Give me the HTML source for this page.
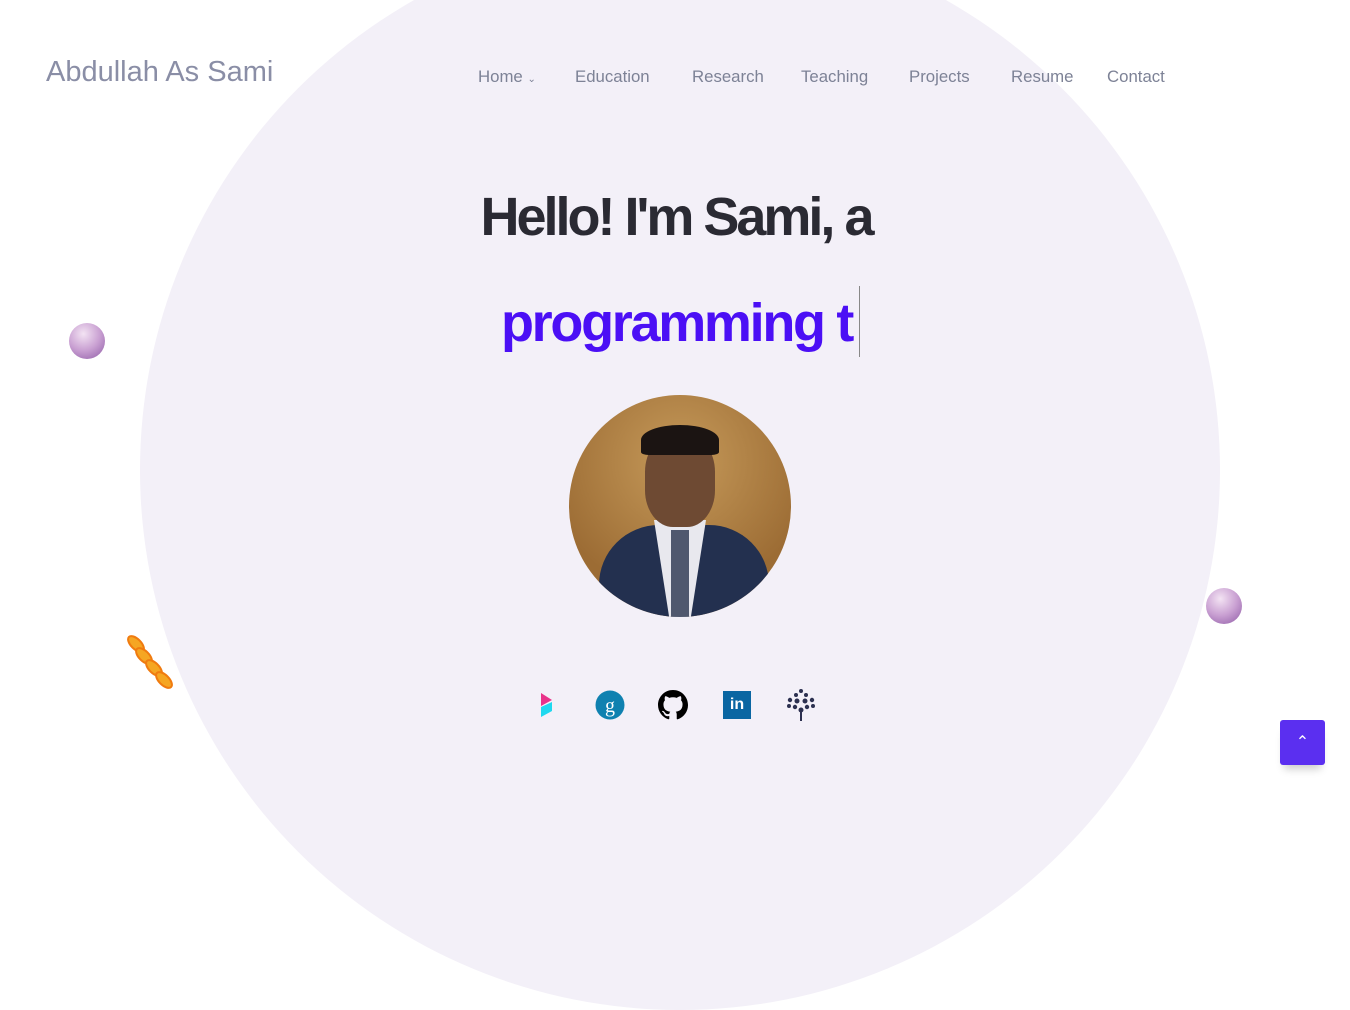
<!DOCTYPE html>
<html><head><meta charset="utf-8"><style>
html,body{margin:0;width:1350px;height:862px;overflow:hidden;background:#fff;font-family:"Liberation Sans",sans-serif}
.bg{position:absolute;left:140px;top:-70px;width:1080px;height:1080px;border-radius:50%;background:#f3f0f8}
.logo{position:absolute;left:46px;top:56px;font-size:29px;color:#8a8ea6;letter-spacing:0px}
.nav{position:absolute;top:67px;font-size:16.8px;color:#7d8296}
h1{position:absolute;left:0;width:1352px;top:186px;margin:0;text-align:center;font-size:54px;font-weight:bold;color:#2a2a33;letter-spacing:-3px}
.typ{position:absolute;left:501px;top:292px;font-size:54px;font-weight:bold;color:#4b0ff5;letter-spacing:-2.3px;white-space:pre}
.cur{position:absolute;left:859px;top:286px;width:1px;height:71px;background:#888}
.photo{position:absolute;left:569px;top:395px;width:222px;height:222px;border-radius:50%;overflow:hidden;background:radial-gradient(circle at 50% 30%,#c69a5a,#9c6c34 70%)}
.ball{position:absolute;width:36px;height:36px;border-radius:50%;background:radial-gradient(circle at 40% 30%,#f3e3f3,#c9a0d2 50%,#8e5aa5)}
.top{position:absolute;left:1280px;top:720px;width:45px;height:45px;border-radius:3px;background:#5b2ff0;box-shadow:0 8px 8px -4px rgba(0,0,0,.2);color:#fff;text-align:center;line-height:45px;font-size:16px}
</style></head><body>
<div class="bg"></div>
<div class="logo">Abdullah As Sami</div>
<div class="nav" style="left:478px">Home <span style="font-size:10px">&#8964;</span></div>
<div class="nav" style="left:575px">Education</div>
<div class="nav" style="left:692px">Research</div>
<div class="nav" style="left:801px">Teaching</div>
<div class="nav" style="left:909px">Projects</div>
<div class="nav" style="left:1011px">Resume</div>
<div class="nav" style="left:1107px">Contact</div>
<h1>Hello! I'm Sami, a</h1>
<div class="typ">programming t</div><div class="cur"></div>
<div class="photo">
<div style="position:absolute;left:30px;top:130px;width:170px;height:120px;border-radius:60px 60px 0 0;background:#23304f"></div>
<div style="position:absolute;left:85px;top:125px;width:52px;height:100px;background:#e8e8ee;clip-path:polygon(0 0,100% 0,70% 100%,30% 100%)"></div>
<div style="position:absolute;left:102px;top:135px;width:18px;height:90px;background:#50586e"></div>
<div style="position:absolute;left:76px;top:40px;width:70px;height:92px;border-radius:40%;background:#6e4a33"></div>
<div style="position:absolute;left:72px;top:30px;width:78px;height:30px;border-radius:50% 50% 10% 10%;background:#1b1412"></div>
</div>
<div class="ball" style="left:69px;top:323px"></div>
<div class="ball" style="left:1206px;top:588px"></div>
<svg style="position:absolute;left:122px;top:632px" width="64" height="64" viewBox="0 0 64 64"><g fill="#f5a623" stroke="#f07b10" stroke-width="2"><ellipse cx="14" cy="12" rx="10" ry="5" transform="rotate(45 14 12)"/><ellipse cx="22" cy="24" rx="10" ry="5" transform="rotate(45 22 24)"/><ellipse cx="32" cy="36" rx="10" ry="5" transform="rotate(45 32 36)"/><ellipse cx="42" cy="48" rx="10" ry="5" transform="rotate(45 42 48)"/></g></svg>
<svg style="position:absolute;left:540px;top:692px" width="14" height="26"><polygon points="1,1 12,8 1,14" fill="#e8338a"/><polygon points="1,15 12,10 12,19 1,25" fill="#1fd8ef"/></svg>
<svg style="position:absolute;left:595px;top:690px" width="30" height="30"><circle cx="15" cy="15" r="14.5" fill="#0f81b0"/><text x="15" y="22" font-size="20" text-anchor="middle" fill="#fff" font-family="Liberation Serif">g</text></svg>
<svg style="position:absolute;left:658px;top:690px" width="30" height="30" viewBox="0 0 16 16"><path fill="#000" d="M8 0C3.58 0 0 3.58 0 8c0 3.54 2.29 6.53 5.47 7.59.4.07.55-.17.55-.38v-1.33c-2.23.49-2.7-1.07-2.7-1.07-.36-.93-.89-1.17-.89-1.17-.73-.5.05-.49.05-.49.8.06 1.230.83 1.23.83.72 1.22 1.87.87 2.33.66.07-.52.28-.87.51-1.07-1.78-.2-3.65-.89-3.65-3.95 0-.87.31-1.59.82-2.15-.08-.2-.36-1.02.08-2.12 0 0 .67-.21 2.2.82a7.6 7.6 0 014 0c1.53-1.04 2.2-.82 2.2-.82.44 1.1.16 1.92.08 2.12.51.56.82 1.27.82 2.15 0 3.07-1.87 3.75-3.65 3.95.29.25.54.73.54 1.48v2.2c0 .21.15.46.55.38A8 8 0 0016 8c0-4.42-3.58-8-8-8z"/></svg>
<div style="position:absolute;left:723px;top:691px;width:28px;height:28px;background:#0a66a2;color:#fff;font-weight:bold;font-size:16px;text-align:center;line-height:28px">in</div>
<svg style="position:absolute;left:785px;top:688px" width="32" height="34"><g fill="#2c3050"><circle cx="16" cy="3" r="2"/><circle cx="11" cy="7" r="2"/><circle cx="21" cy="7" r="2"/><circle cx="5" cy="12" r="2.2"/><circle cx="27" cy="12" r="2.2"/><circle cx="12" cy="13" r="2.5"/><circle cx="20" cy="13" r="2.5"/><circle cx="4" cy="18" r="2"/><circle cx="28" cy="18" r="2"/><circle cx="10" cy="19" r="2.2"/><circle cx="22" cy="19" r="2.2"/><circle cx="16" cy="22" r="2.5"/><rect x="15" y="20" width="2" height="13"/></g></svg>
<div class="top">&#8963;</div>
</body></html>
